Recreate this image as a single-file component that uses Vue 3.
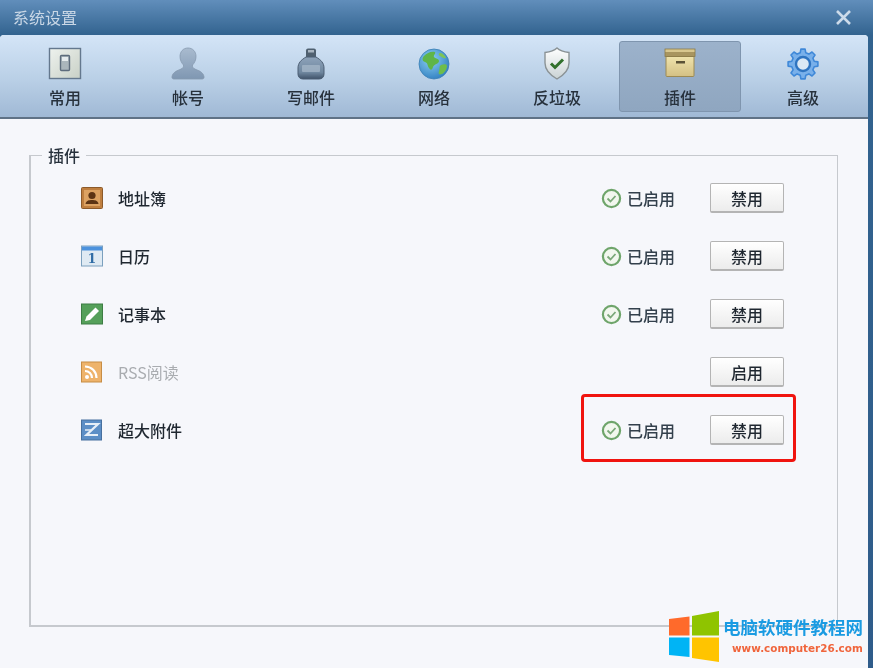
<script setup>
const tabs = [
  { id: 'general', label: '常用' },
  { id: 'account', label: '帐号' },
  { id: 'compose', label: '写邮件' },
  { id: 'network', label: '网络' },
  { id: 'spam', label: '反垃圾' },
  { id: 'plugin', label: '插件', active: true },
  { id: 'advanced', label: '高级' },
]
const plugins = [
  { id: 'contacts', name: '地址簿', on: true },
  { id: 'calendar', name: '日历', on: true },
  { id: 'notes', name: '记事本', on: true },
  { id: 'rss', name: 'RSS阅读', on: false },
  { id: 'attach', name: '超大附件', on: true },
]
const gearPath = (() => {
  const cx = 18, cy = 17, ro = 15, ri = 11.5, n = 8
  const pts = []
  for (let i = 0; i < n; i++) {
    const a = (i / n) * Math.PI * 2 - Math.PI / 2
    const s = Math.PI / n
    const add = (r, t) => pts.push(`${(cx + r * Math.cos(t)).toFixed(1)} ${(cy + r * Math.sin(t)).toFixed(1)}`)
    add(ri, a - s * 0.62)
    add(ro, a - s * 0.36)
    add(ro, a + s * 0.36)
    add(ri, a + s * 0.62)
  }
  return 'M' + pts.join('L') + 'Z'
})()
</script>

<template>
  <div class="window">
    <header class="titlebar">
      <span class="title">系统设置</span>
      <svg class="close" width="17" height="17" viewBox="0 0 17 17">
        <path d="M2 2 15 15M15 2 2 15" stroke="#cddbea" stroke-width="2.600" fill="none" />
      </svg>
    </header>

    <div class="panel">
      <nav class="toolbar">
        <div v-for="t in tabs" :key="t.id" class="tab" :class="{ active: t.active }">
          <svg class="tab-icon" width="36" height="34" viewBox="0 0 36 34">
            <defs>
              <linearGradient id="bodyGray" x1="0" y1="0" x2="0" y2="1">
                <stop offset="0" stop-color="#a9bbcf" /><stop offset="1" stop-color="#7f97b2" />
              </linearGradient>
              <linearGradient id="inkBody" x1="0" y1="0" x2="0" y2="1">
                <stop offset="0" stop-color="#8ea3ba" /><stop offset=".7" stop-color="#6f879f" /><stop offset="1" stop-color="#3f5269" />
              </linearGradient>
              <linearGradient id="boxTan" x1="0" y1="0" x2="0" y2="1">
                <stop offset="0" stop-color="#efe3ac" /><stop offset="1" stop-color="#d3c084" />
              </linearGradient>
              <linearGradient id="shieldFill" x1="0" y1="0" x2="0" y2="1">
                <stop offset="0" stop-color="#ffffff" /><stop offset="1" stop-color="#c9d2d4" />
              </linearGradient>
              <radialGradient id="globeFill" cx=".4" cy=".35" r=".75">
                <stop offset="0" stop-color="#8cd0f2" /><stop offset="1" stop-color="#2a79bd" />
              </radialGradient>
              <linearGradient id="switchFill" x1="0" y1="0" x2="1" y2="1">
                <stop offset="0" stop-color="#eef2ee" /><stop offset="1" stop-color="#c8d0c6" />
              </linearGradient>
            </defs>
            <g v-if="t.id === 'general'">
              <rect x="2.500" y="1.500" width="31" height="30" fill="url(#switchFill)" stroke="#64788e" stroke-width="1.400" />
              <rect x="13.500" y="8.500" width="9" height="15" rx="1" fill="#aab6bc" stroke="#5d6c7c" stroke-width="1.400" />
              <rect x="15" y="10" width="6" height="4" fill="#e6ecee" />
            </g>
            <g v-else-if="t.id === 'account'">
              <path d="M18 1c-5 0-8 3.800-8 8.500 0 3.500 1.500 6.500 3.500 8.500.3 1.800-.5 3.200-2.500 4.100-3.800 1.600-8 2.900-9 7.400-.3 1.500.4 2.500 1.800 2.500h28.400c1.400 0 2.100-1 1.800-2.500-1-4.500-5.200-5.800-9-7.400-2-.9-2.800-2.300-2.500-4.100 2-2 3.500-5 3.500-8.500C26 4.800 23 1 18 1z" fill="url(#bodyGray)" stroke="#8699ae" stroke-width=".8" />
            </g>
            <g v-else-if="t.id === 'compose'">
              <rect x="13" y="1.500" width="10" height="10" rx="2" fill="#4f6070" />
              <rect x="15" y="3" width="6" height="2.500" fill="#a8b4c0" />
              <path d="M13 10C8 13 5 16 5 21v6c0 3 2 5 5 5h16c3 0 5-2 5-5v-6c0-5-3-8-8-11z" fill="url(#inkBody)" stroke="#4d5f74" stroke-width="1" />
              <rect x="9" y="18" width="18" height="7" rx="1" fill="#a6b7c8" opacity=".75" />
            </g>
            <g v-else-if="t.id === 'network'">
              <circle cx="18" cy="17" r="15" fill="url(#globeFill)" stroke="#3b7fb5" stroke-width=".8" />
              <path d="M8 9c3-3 7-5 11-4 1 2-2 3-1 5s5 1 5 4-5 3-6 6-2 4-4 1-1-5-4-6-3-4-1-6z" fill="#5fb548" />
              <path d="M25 18c3-1 6-1 6 1s-2 7-5 8-4 0-3-3 0-5 2-6z" fill="#6fbd4a" />
              <path d="M24 6c2 0 5 2 6 5-2 1-4-1-6-2s-1-3 0-3z" fill="#7ec455" />
            </g>
            <g v-else-if="t.id === 'spam'">
              <path d="M18 1c3 3 7 4 12 4.500V16c0 7-5 12-12 16-7-4-12-9-12-16V5.500C11 5 15 4 18 1z" fill="url(#shieldFill)" stroke="#8b9396" stroke-width="1.400" />
              <path d="M12 16.500l4 4 8-8" fill="none" stroke="#31702c" stroke-width="3" />
            </g>
            <g v-else-if="t.id === 'plugin'">
              <rect x="4" y="9.500" width="28" height="20" rx="1" fill="url(#boxTan)" stroke="#9c8a52" stroke-width="1" />
              <rect x="3" y="2" width="30" height="7.500" fill="#a8955f" stroke="#8a7a48" stroke-width=".8" />
              <rect x="3.500" y="2.500" width="29" height="2.500" fill="#d8c78e" />
              <rect x="14" y="14" width="9" height="2.500" fill="#5b5236" />
            </g>
            <g v-else>
              <path :d="gearPath" fill="#79b0ea" stroke="#3f88d8" stroke-width="1.600" stroke-linejoin="round" />
              <circle cx="18" cy="17" r="7" fill="#dce8f4" stroke="#2f74c0" stroke-width="2.400" />
            </g>
          </svg>
          <span class="tab-label">{{ t.label }}</span>
        </div>
      </nav>

      <main class="content">
        <fieldset class="group">
          <legend>插件</legend>
          <div v-for="p in plugins" :key="p.id" class="row">
            <svg class="plugin-icon" width="24" height="24" viewBox="0 0 24 24">
              <g v-if="p.id === 'contacts'">
                <rect x="1.500" y="1.500" width="21" height="21" rx="1" fill="#bf7f3f" stroke="#8c5a2a" />
                <rect x="4" y="4" width="16" height="16" fill="#dca262" />
                <circle cx="12" cy="9.500" r="3.600" fill="#5c3414" />
                <path d="M5.500 18c.5-3.500 3.500-4 6.500-4s6 .5 6.500 4z" fill="#5c3414" />
              </g>
              <g v-else-if="p.id === 'calendar'">
                <rect x="1.500" y="2" width="21" height="20" fill="#dfeaf3" stroke="#7ba0be" />
                <rect x="2" y="2.500" width="20" height="4" fill="#4c92dd" />
                <text x="12" y="18.500" text-anchor="middle" class="cal">1</text>
              </g>
              <g v-else-if="p.id === 'notes'">
                <rect x="1.500" y="2" width="21" height="20" fill="#55a05a" stroke="#3d7d44" />
                <path d="M5 19l1.500-4.500 9-9 3.500 3.500-9 9z" fill="#ffffff" />
              </g>
              <g v-else-if="p.id === 'rss'">
                <rect x="1.500" y="2" width="20" height="20" fill="#eeb36b" stroke="#c78d45" />
                <circle cx="7" cy="17" r="2" fill="#fff" />
                <path d="M5 11c4 0 7 3 7 7M5 6.500c6.500 0 11.500 5 11.500 11.500" fill="none" stroke="#fff" stroke-width="2.200" />
              </g>
              <g v-else>
                <rect x="1.500" y="2" width="20" height="20" fill="#5c8ec6" stroke="#47709f" />
                <path d="M5 6h13L6.500 17H18" fill="none" stroke="#e6eef7" stroke-width="2.200" />
                <path d="M5 12h6" stroke="#e6eef7" stroke-width="1.500" />
              </g>
            </svg>
            <span class="name" :class="{ muted: !p.on }">{{ p.name }}</span>
            <div class="actions">
              <span v-if="p.on" class="status">
                <svg width="21" height="21" viewBox="0 0 21 21">
                  <circle cx="10.500" cy="10.500" r="8.600" fill="#f2f7ee" stroke="#6fa56b" stroke-width="2.200" />
                  <path d="M6.500 10.500l3 3 5-5.500" fill="none" stroke="#7aa878" stroke-width="1.800" />
                </svg>
                <span>已启用</span>
              </span>
              <button class="btn" type="button">{{ p.on ? '禁用' : '启用' }}</button>
            </div>
          </div>
        </fieldset>
      </main>
    </div>

    <div class="highlight"></div>

    <div class="watermark">
      <svg width="51" height="52" viewBox="0 0 51 52">
        <path d="M0 8 20.500 5.500V24.500H0z" fill="#ff6a2b" />
        <path d="M23 5 50 0v24.500H23z" fill="#8fc400" />
        <path d="M0 26.500h20.500V46L0 44z" fill="#00b4f5" />
        <path d="M23 26.500h27V51L23 47z" fill="#ffc400" />
      </svg>
      <div class="wm-text">
        <div class="wm-cn">电脑软硬件教程网</div>
        <div class="wm-url">www.computer26.com</div>
      </div>
    </div>
  </div>
</template>

<style>
html, body { margin: 0; padding: 0; }
</style>

<style scoped>
.window {
  position: relative;
  width: 873px;
  height: 668px;
  overflow: hidden;
  display: flex;
  flex-direction: column;
  background: linear-gradient(#618ebb 0, #32638f 35px, #2f5c8a 100%);
  font-family: "Noto Sans CJK SC", "Liberation Sans", sans-serif;
  color: #232c36;
  filter: blur(0.6px);
}
.titlebar {
  height: 35px;
  flex: none;
  display: flex;
  align-items: center;
  justify-content: space-between;
  padding: 0 21px 0 13px;
  box-sizing: border-box;
}
.title { font-size: 16px; color: #c9d7e6; line-height: 33px; }
.close { display: block; }
.panel {
  flex: 1;
  min-height: 0;
  margin-right: 5px;
  display: flex;
  flex-direction: column;
  background: #f6f7fb;
  border-radius: 4px 4px 0 0;
  overflow: hidden;
}
.toolbar {
  height: 84px;
  flex: none;
  box-sizing: border-box;
  padding: 6px 0 5px 4px;
  display: grid;
  grid-template-columns: repeat(7, 122px);
  column-gap: 1px;
  background: linear-gradient(#d4e5f7, #b9cfe6 55%, #a0b9d5);
  border-bottom: 2px solid #5f7286;
}
.tab {
  display: flex;
  flex-direction: column;
  align-items: center;
  padding-top: 5px;
  box-sizing: border-box;
  border: 1px solid transparent;
  border-radius: 3px;
}
.tab.active {
  background: linear-gradient(#9cb2cb, #8fa6c0);
  border-color: #7f95ae;
}
.tab-icon { display: block; height: 34px; }
.tab-label { font-size: 16px; font-weight: 500; line-height: 22px; margin-top: 5px; color: #27313c; }
.content {
  flex: 1;
  min-height: 0;
  padding: 25px 30px 0 29px;
}
.group {
  margin: 0;
  padding: 3px 0 0;
  height: 483px;
  box-sizing: border-box;
  border: 1px solid #c6c9ce;
  border-width: 1px 1px 2px 2px;
  min-width: 0;
}
.group legend {
  margin-left: 11px;
  padding: 0 6px;
  font-size: 16px;
  font-weight: 500;
  line-height: 22px;
  color: #27313c;
}
.row {
  height: 58px;
  padding: 0 53px 0 49px;
  display: flex;
  align-items: center;
}
.plugin-icon { flex: none; display: block; }
.name { margin-left: 14px; font-size: 16px; font-weight: 500; color: #1f2730; }
.name.muted { font-weight: 400; color: #a9acb0; }
.cal { font: bold 12px "DejaVu Serif", serif; fill: #2f6ca5; }
.actions {
  margin-left: auto;
  display: flex;
  align-items: center;
  gap: 35px;
}
.status {
  display: flex;
  align-items: center;
  gap: 5px;
  font-size: 16px;
  font-weight: 500;
  color: #33404c;
}
.btn {
  width: 74px;
  height: 30px;
  padding: 0;
  font: inherit;
  font-size: 16px;
  font-weight: 500;
  line-height: 26px;
  color: #1f2730;
  background: linear-gradient(#ffffff, #ececec);
  border: 1px solid #b4b4b4;
  border-bottom-width: 2px;
  border-radius: 2px;
}
.highlight {
  position: absolute;
  left: 581px;
  top: 394px;
  width: 215px;
  height: 68px;
  box-sizing: border-box;
  border: 3px solid #f0140f;
  border-radius: 4px;
}
.watermark {
  position: absolute;
  left: 669px;
  top: 611px;
  display: flex;
  align-items: flex-start;
  gap: 3px;
}
.wm-text { padding-top: 5px; }
.wm-cn {
  font-size: 17.5px;
  line-height: 22px;
  font-weight: 700;
  color: #1a9be2;
  white-space: nowrap;
}
.wm-url {
  margin: 3px 0 0 9px;
  font: 700 10.4px/14px "DejaVu Sans", sans-serif;
  color: #f0653c;
  white-space: nowrap;
}
</style>
